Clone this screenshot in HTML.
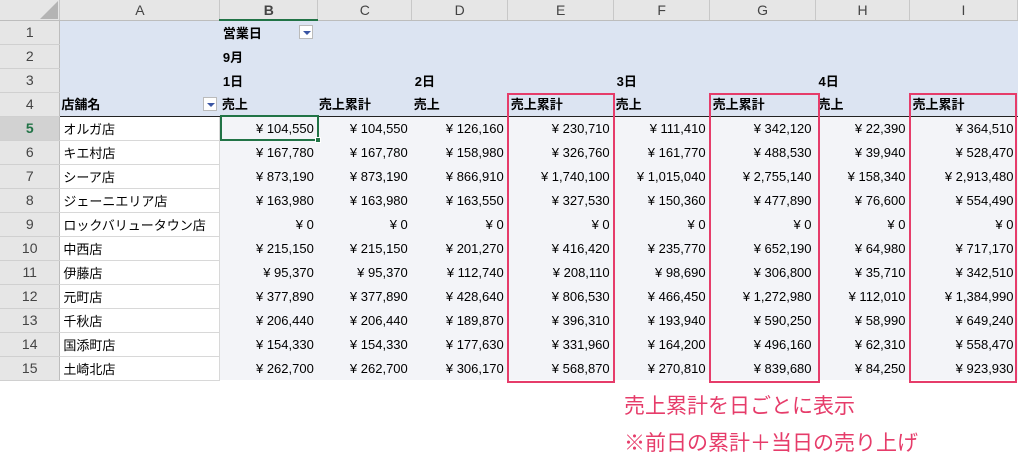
<!DOCTYPE html><html><head><meta charset="utf-8"><style>
*{margin:0;padding:0;box-sizing:border-box}
body{width:1018px;height:460px;background:#fff;font-family:"Liberation Sans","Noto Sans CJK JP",sans-serif;font-size:13px;color:#000;position:relative;overflow:hidden}
table{border-collapse:collapse;table-layout:fixed;position:absolute;left:0;top:0}
td{height:24px;white-space:nowrap;overflow:hidden;padding:0 3px}
tr.h td{height:20px;background:#e6e6e6;color:#444;text-align:center;border-right:1px solid #c8c8c8;border-bottom:1px solid #bdbdbd;font-size:14px}
td.rh{background:#e6e6e6;color:#444;text-align:center;border-bottom:1px solid #d0d0d0;border-right:1px solid #bdbdbd;font-size:14px}
td.sel{background:#d2d2d2;color:#217346;font-weight:bold}
tr.h td.sel{border-bottom:2px solid #217346}
td.bl{background:#dce4f2;font-weight:bold}
td.a{border-bottom:1px solid #d8d8d8;border-right:1px solid #d8d8d8;background:#fff}
td.v{background:#f3f4f8;text-align:right;padding-right:4px}
tr.r4 td.bl{border-bottom:1px solid #222}
.dd{position:absolute;width:14px;height:14px;background:#fff;border:1px solid #bbb}
.dd:after{content:"";position:absolute;left:3px;top:5px;border-left:4px solid transparent;border-right:4px solid transparent;border-top:4px solid #3a55a4}
.box{position:absolute;border:2px solid #e63c6a}
.note{position:absolute;left:624px;color:#e63c6a;font-size:21px;line-height:30px}
</style></head><body>
<table>
<colgroup><col style="width:60px"><col style="width:160px"><col style="width:98px"><col style="width:94px"><col style="width:96px"><col style="width:106px"><col style="width:96px"><col style="width:106px"><col style="width:94px"><col style="width:108px"></colgroup>
<tr class="h"><td></td><td>A</td><td class="sel">B</td><td>C</td><td>D</td><td>E</td><td>F</td><td>G</td><td>H</td><td>I</td></tr>
<tr><td class="rh">1</td><td class="bl"></td><td class="bl">営業日</td><td class="bl"></td><td class="bl"></td><td class="bl"></td><td class="bl"></td><td class="bl"></td><td class="bl"></td><td class="bl"></td></tr>
<tr><td class="rh">2</td><td class="bl"></td><td class="bl">9月</td><td class="bl"></td><td class="bl"></td><td class="bl"></td><td class="bl"></td><td class="bl"></td><td class="bl"></td><td class="bl"></td></tr>
<tr><td class="rh">3</td><td class="bl"></td><td class="bl">1日</td><td class="bl"></td><td class="bl">2日</td><td class="bl"></td><td class="bl">3日</td><td class="bl"></td><td class="bl">4日</td><td class="bl"></td></tr>
<tr class="r4"><td class="rh">4</td><td class="bl" style="padding-left:1px">店舗名</td><td class="bl" style="padding-left:2px">売上</td><td class="bl" style="padding-left:1px">売上累計</td><td class="bl" style="padding-left:2px">売上</td><td class="bl">売上累計</td><td class="bl" style="padding-left:2px">売上</td><td class="bl">売上累計</td><td class="bl" style="padding-left:2px">売上</td><td class="bl">売上累計</td></tr>
<tr><td class="rh sel">5</td><td class="a">オルガ店</td><td class="v">¥ 104,550</td><td class="v">¥ 104,550</td><td class="v">¥ 126,160</td><td class="v">¥ 230,710</td><td class="v">¥ 111,410</td><td class="v">¥ 342,120</td><td class="v">¥ 22,390</td><td class="v">¥ 364,510</td></tr>
<tr><td class="rh">6</td><td class="a">キエ村店</td><td class="v">¥ 167,780</td><td class="v">¥ 167,780</td><td class="v">¥ 158,980</td><td class="v">¥ 326,760</td><td class="v">¥ 161,770</td><td class="v">¥ 488,530</td><td class="v">¥ 39,940</td><td class="v">¥ 528,470</td></tr>
<tr><td class="rh">7</td><td class="a">シーア店</td><td class="v">¥ 873,190</td><td class="v">¥ 873,190</td><td class="v">¥ 866,910</td><td class="v">¥ 1,740,100</td><td class="v">¥ 1,015,040</td><td class="v">¥ 2,755,140</td><td class="v">¥ 158,340</td><td class="v">¥ 2,913,480</td></tr>
<tr><td class="rh">8</td><td class="a">ジェーニエリア店</td><td class="v">¥ 163,980</td><td class="v">¥ 163,980</td><td class="v">¥ 163,550</td><td class="v">¥ 327,530</td><td class="v">¥ 150,360</td><td class="v">¥ 477,890</td><td class="v">¥ 76,600</td><td class="v">¥ 554,490</td></tr>
<tr><td class="rh">9</td><td class="a">ロックバリュータウン店</td><td class="v">¥ 0</td><td class="v">¥ 0</td><td class="v">¥ 0</td><td class="v">¥ 0</td><td class="v">¥ 0</td><td class="v">¥ 0</td><td class="v">¥ 0</td><td class="v">¥ 0</td></tr>
<tr><td class="rh">10</td><td class="a">中西店</td><td class="v">¥ 215,150</td><td class="v">¥ 215,150</td><td class="v">¥ 201,270</td><td class="v">¥ 416,420</td><td class="v">¥ 235,770</td><td class="v">¥ 652,190</td><td class="v">¥ 64,980</td><td class="v">¥ 717,170</td></tr>
<tr><td class="rh">11</td><td class="a">伊藤店</td><td class="v">¥ 95,370</td><td class="v">¥ 95,370</td><td class="v">¥ 112,740</td><td class="v">¥ 208,110</td><td class="v">¥ 98,690</td><td class="v">¥ 306,800</td><td class="v">¥ 35,710</td><td class="v">¥ 342,510</td></tr>
<tr><td class="rh">12</td><td class="a">元町店</td><td class="v">¥ 377,890</td><td class="v">¥ 377,890</td><td class="v">¥ 428,640</td><td class="v">¥ 806,530</td><td class="v">¥ 466,450</td><td class="v">¥ 1,272,980</td><td class="v">¥ 112,010</td><td class="v">¥ 1,384,990</td></tr>
<tr><td class="rh">13</td><td class="a">千秋店</td><td class="v">¥ 206,440</td><td class="v">¥ 206,440</td><td class="v">¥ 189,870</td><td class="v">¥ 396,310</td><td class="v">¥ 193,940</td><td class="v">¥ 590,250</td><td class="v">¥ 58,990</td><td class="v">¥ 649,240</td></tr>
<tr><td class="rh">14</td><td class="a">国添町店</td><td class="v">¥ 154,330</td><td class="v">¥ 154,330</td><td class="v">¥ 177,630</td><td class="v">¥ 331,960</td><td class="v">¥ 164,200</td><td class="v">¥ 496,160</td><td class="v">¥ 62,310</td><td class="v">¥ 558,470</td></tr>
<tr><td class="rh">15</td><td class="a">土崎北店</td><td class="v">¥ 262,700</td><td class="v">¥ 262,700</td><td class="v">¥ 306,170</td><td class="v">¥ 568,870</td><td class="v">¥ 270,810</td><td class="v">¥ 839,680</td><td class="v">¥ 84,250</td><td class="v">¥ 923,930</td></tr>
</table>
<div style="position:absolute;width:0;height:0;border-left:18px solid transparent;border-bottom:18px solid #b4b4b4;left:40px;top:1px"></div>
<div class="dd" style="left:299px;top:25px"></div>
<div class="dd" style="left:203px;top:97px"></div>
<div style="position:absolute;left:220px;top:115px;width:99px;height:26px;border:2px solid #217346"></div>
<div style="position:absolute;left:315px;top:137px;width:6px;height:6px;background:#217346;border:1px solid #fff"></div>
<div class="box" style="left:507px;top:93px;width:108px;height:290px"></div>
<div class="box" style="left:709px;top:93px;width:111px;height:290px"></div>
<div class="box" style="left:909px;top:93px;width:108px;height:290px"></div>
<div class="note" style="top:392px">売上累計を日ごとに表示</div>
<div class="note" style="top:429px">※前日の累計＋当日の売り上げ</div>
</body></html>
